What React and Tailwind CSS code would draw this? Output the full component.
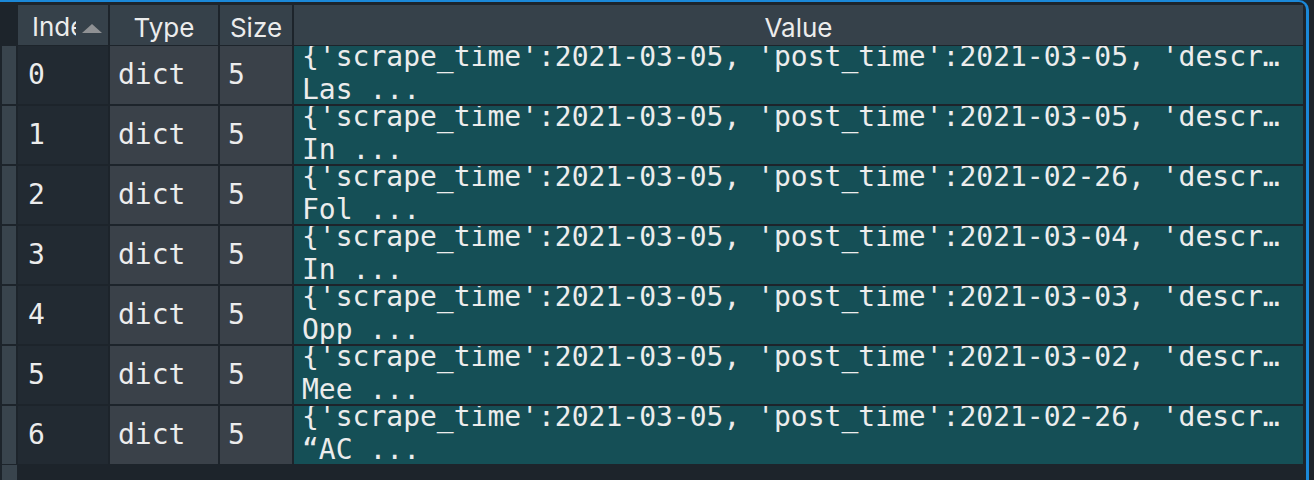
const rows = [
  { i: 0, post: '2021-03-05', rest: 'Las ...' },
  { i: 1, post: '2021-03-05', rest: 'In ...' },
  { i: 2, post: '2021-02-26', rest: 'Fol ...' },
  { i: 3, post: '2021-03-04', rest: 'In ...' },
  { i: 4, post: '2021-03-03', rest: 'Opp ...' },
  { i: 5, post: '2021-03-02', rest: 'Mee ...' },
  { i: 6, post: '2021-02-26', rest: '\u201cAC ...' },
]

const mono = { fontFamily: '"DejaVu Sans Mono", monospace' }

export default function App() {
  return (
    <div className="w-[1314px] h-[480px] bg-[#1d242b] overflow-hidden">
      <div className="w-[1309px] h-[480px] border-t-2 border-r-[3px] border-[#1b88d8] rounded-tr-[10px] pt-[3px] pr-[3px] flex flex-col">
        {/* header */}
        <div className="flex gap-[2px] h-[40px] shrink-0 text-[26px] text-[#ececec] font-['Inter',sans-serif]">
          <div className="w-[16px]" />
          <div className="w-[90px] bg-[#36414a] flex items-center pl-[14px] pt-[4px] relative overflow-hidden">
            <span className="w-[44px] overflow-hidden whitespace-nowrap leading-none">Index</span>
            <svg className="absolute left-[64px] top-[19px]" width="20" height="9" viewBox="0 0 20 9">
              <polygon points="0,9 20,9 10,0" fill="#8f9194" />
            </svg>
          </div>
          <div className="w-[108px] bg-[#36414a] flex items-center justify-center pt-[4px]">Type</div>
          <div className="w-[72px] bg-[#36414a] flex items-center justify-center pt-[4px]">Size</div>
          <div className="flex-1 bg-[#36414a] flex items-center justify-center pt-[4px]">Value</div>
        </div>

        {/* rows */}
        <div className="flex flex-col gap-[2px] mt-[1px] text-[28px] text-[#ececec]" style={mono}>
          {rows.map(r => (
            <div key={r.i} className="flex gap-[2px] h-[58px]">
              <div className="w-[16px] flex">
                <div className="ml-[2px] w-[15px] bg-[#39444d]" />
              </div>
              <div className="w-[90px] bg-[#222a32] flex items-center pl-[10px]">{r.i}</div>
              <div className="w-[108px] bg-[#3a4149] flex items-center pl-[8px]">dict</div>
              <div className="w-[72px] bg-[#3a4149] flex items-center pl-[8px]">5</div>
              <div className="flex-1 bg-[#154f56] overflow-hidden pl-[8px]">
                <div className="mt-[-6px] leading-[33px] whitespace-pre">
                  <div>{`{'scrape_time':2021-03-05, 'post_time':${r.post}, 'descr\u2026`}</div>
                  <div>{r.rest}</div>
                </div>
              </div>
            </div>
          ))}
        </div>

        {/* gutter filler */}
        <div className="flex-1 flex mt-[1px]">
          <div className="ml-[2px] w-[15px] bg-[#39444d]" />
        </div>
      </div>
    </div>
  )
}
